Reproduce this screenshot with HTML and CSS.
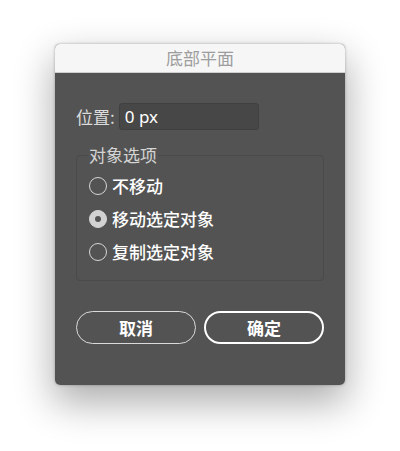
FILE: index.html
```html
<!DOCTYPE html>
<html>
<head>
  <title>底部平面</title>
  <link rel="stylesheet" href="styles.css">
</head>
<body>

  <div class="window">
    <div class="dialog">
      <div class="titlebar">底部平面</div>
      <div class="content">
        <div class="field">
          <label for="pos">位置:</label>
          <input id="pos" type="text" value="0 px">
        </div>

        <fieldset class="group">
          <legend>对象选项</legend>
          <div class="option"><span class="radio"></span>不移动</div>
          <div class="option"><span class="radio checked"></span>移动选定对象</div>
          <div class="option"><span class="radio"></span>复制选定对象</div>
        </fieldset>

        <div class="buttons">
          <button class="btn">取消</button>
          <button class="btn primary">确定</button>
        </div>
      </div>
    </div>
  </div>

</body>
</html>
```

FILE: styles.css
```css
html, body { height: 100%; }
body { margin: 0; box-sizing: border-box; min-height: 451px; background: #fff; font-family: "Noto Sans CJK SC", "Noto Sans", sans-serif; padding-top: 44px; }
.window { width: 290px; margin: 0 auto; border-radius: 5px; box-shadow: 0 16px 38px 2px rgba(0,0,0,0.32), 0 0 3px rgba(0,0,0,0.3); }
.dialog { height: 341px; background: #535353; border-radius: 5px; overflow: hidden; }
.titlebar { height: 28px; line-height: 28px; background: #f6f6f6; border-bottom: 1px solid #cfcfcf; text-align: center; color: #9d9d9d; font-size: 17px; }
.content { padding: 30px 21px 0; }
.field { display: flex; align-items: center; height: 27px; }
.field label { color: #dcdcdc; font-size: 17px; margin-right: 4px; }
.field input { width: 128px; height: 25px; box-sizing: content-box; padding: 0 5px; background: #474747; border: 1px solid #404040; border-radius: 3px; color: #fff; font-family: "Noto Sans", sans-serif; font-size: 17px; outline: none; }
.group { margin: 15px 0 0; padding: 4px 12px 12px 12px; border: 1px solid #4a4a4a; border-radius: 4px; }
.group legend { padding: 0 1px; margin-left: -1px; color: #d4d4d4; font-size: 17px; line-height: 20px; }
.option { display: flex; align-items: center; height: 33px; color: #fff; font-size: 17px; font-weight: 500; }
.radio { width: 16px; height: 16px; border: 1.5px solid #d6d6d6; border-radius: 50%; margin-right: 5px; display: flex; align-items: center; justify-content: center; }
.radio.checked { background: #d2d2d2; }
.radio.checked::after { content: ""; width: 6px; height: 6px; border-radius: 50%; background: #535353; }
.buttons { display: flex; gap: 8px; margin-top: 30px; }
.btn { width: 120px; height: 33px; border-radius: 17px; background: transparent; border: 1.5px solid #dadada; color: #fff; font-family: "Noto Sans CJK SC", sans-serif; font-size: 17px; font-weight: 700; }
.btn.primary { border: 2px solid #fff; }
```
